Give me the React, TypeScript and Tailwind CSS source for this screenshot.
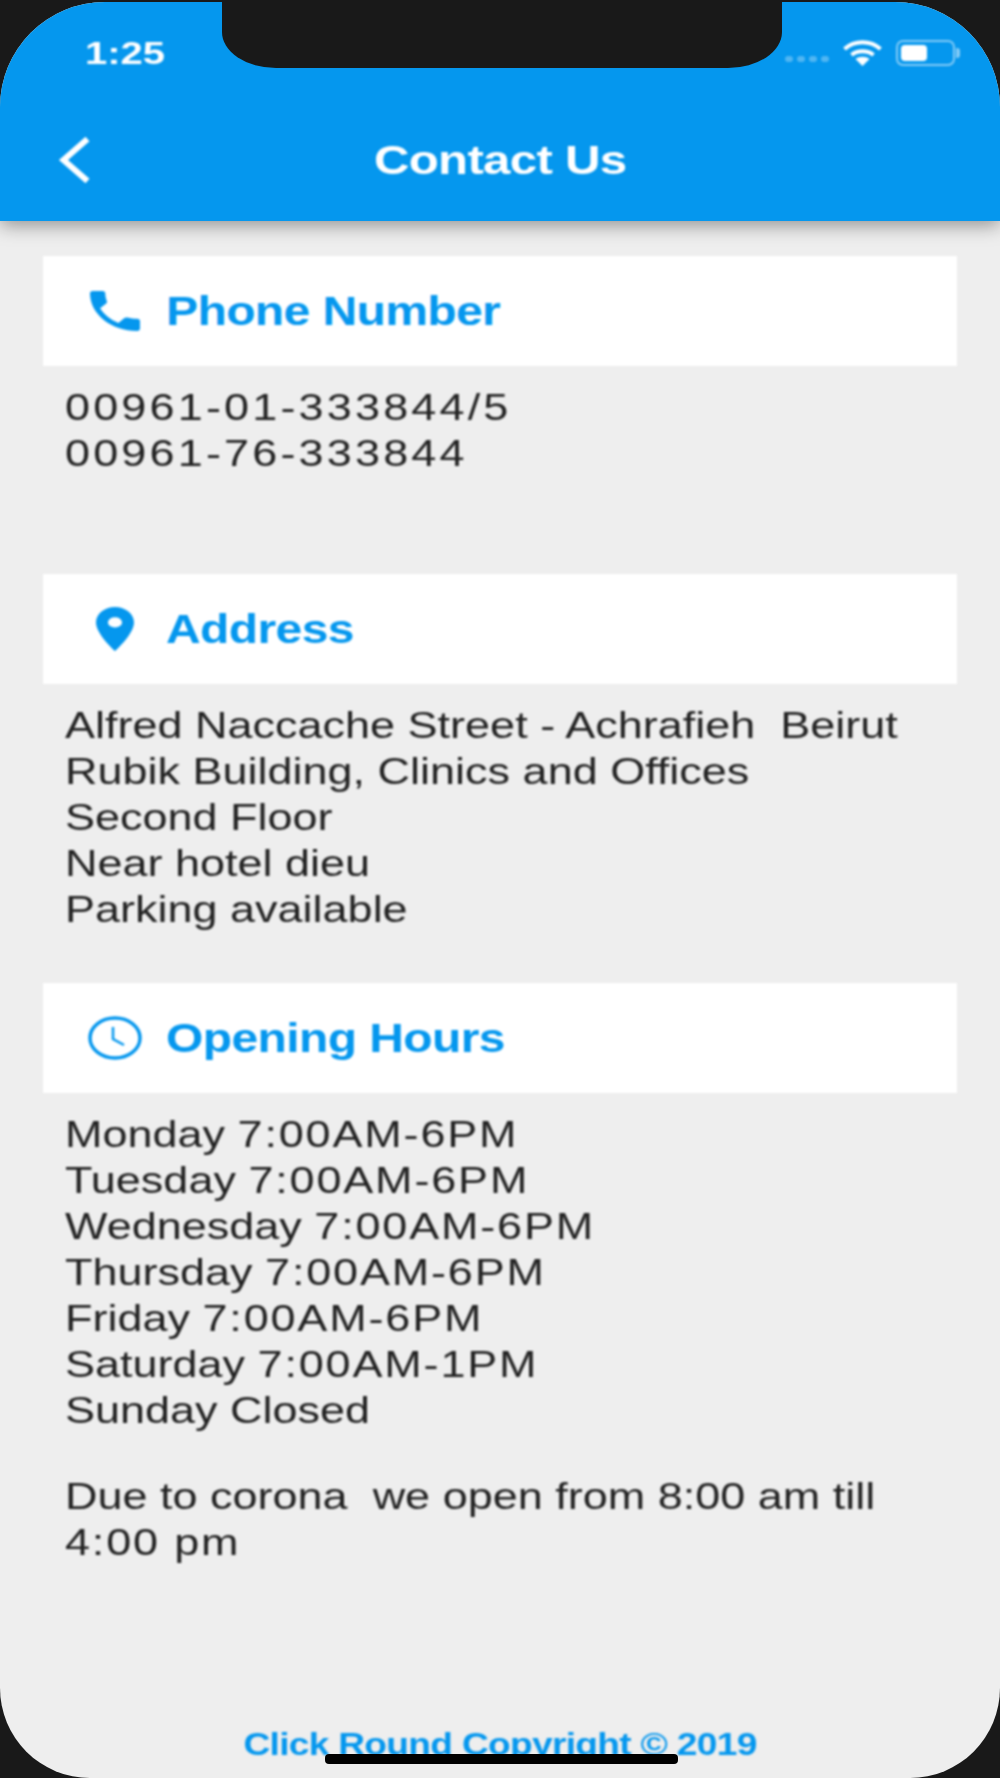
const blue = "#0597ee";

const PhoneIcon = () => (
  <svg viewBox="3 3 18 18" preserveAspectRatio="none" className="w-[50px] h-[40px]" fill={blue}>
    <path d="M6.62 10.79c1.44 2.83 3.76 5.14 6.59 6.59l2.2-2.2c.27-.27.67-.36 1.02-.24 1.12.37 2.33.57 3.57.57.55 0 1 .45 1 1V20c0 .55-.45 1-1 1-9.39 0-17-7.61-17-17 0-.55.45-1 1-1h3.5c.55 0 1 .45 1 1 0 1.25.2 2.45.57 3.57.11.35.03.74-.25 1.02l-2.2 2.2z" />
  </svg>
);

const PinIcon = () => (
  <svg viewBox="5 2 14 20" preserveAspectRatio="none" className="w-[38px] h-[44px]" fill={blue}>
    <path d="M12 2C8.13 2 5 5.13 5 9c0 5.25 7 13 7 13s7-7.75 7-13c0-3.87-3.13-7-7-7zm0 9.3a2.6 2.3 0 1 1 0-4.6 2.6 2.3 0 0 1 0 4.6z" fillRule="evenodd" />
  </svg>
);

const ClockIcon = () => (
  <svg viewBox="0 0 54 44" className="w-[54px] h-[44px]" fill="none" stroke={blue}>
    <ellipse cx="27" cy="22" rx="25" ry="20" strokeWidth="3.5" />
    <path d="M25 11v12l11 6" strokeWidth="2.5" />
  </svg>
);

const Card = ({ icon, title }: { icon: React.ReactNode; title: string }) => (
  <div className="h-[110px] bg-white flex items-center">
    <div className="w-[123px] shrink-0 flex justify-center pl-[20px]">{icon}</div>
    <h2 className="text-[40px] font-bold tracking-[-0.5px] text-[#0597ee] scale-x-[1.2] origin-left">{title}</h2>
  </div>
);

// the shot is stretched sideways, so text gets scale-x. digits run wider than that
const T = ({ children }: { children: React.ReactNode }) => <span className="tracking-[1.5px]">{children}</span>;

const Lines = ({ children, className }: { children: React.ReactNode; className: string }) => (
  <div className={"ml-[22px] text-[37px] leading-[46px] text-[#222222] whitespace-pre scale-x-[1.216] origin-left " + className}>
    {children}
  </div>
);

export default function App() {
  return (
    <div className="w-[1000px] h-[1778px] overflow-hidden bg-[#191919] pt-[2px] font-['Liberation_Sans',sans-serif]">
      <div className="relative w-full h-[1776px] overflow-hidden bg-[#eeeeee] rounded-tl-[105px] rounded-tr-[105px] rounded-bl-[90px] rounded-br-[90px] flex flex-col">
        <header className="h-[219px] shrink-0 bg-[#0597ee] shadow-[0_4px_18px_rgba(0,0,0,0.4)] text-white relative">
          <div className="flex justify-between items-center pl-[85px] pr-[37px] pt-[33px] blur-[0.8px]">
            <span className="text-[32px] font-bold leading-[36px] scale-x-[1.25] origin-left">1:25</span>
            <div className="flex items-center">
              <div className="flex gap-[4px] mr-[13px] mt-[12px]">
                {[0, 1, 2, 3].map((i) => (
                  <span key={i} className="w-[8px] h-[6px] rounded-full bg-white/30" />
                ))}
              </div>
              <svg viewBox="0 0 40 26" className="w-[41px] h-[26px] mr-[13px]" fill="none" stroke="white">
                <path d="M2 9C12 0 28 0 38 9" strokeWidth="4" />
                <path d="M9 15c6-5 16-5 22 0" strokeWidth="4" />
                <path d="M20 26l-7-7c4-3 10-3 14 0z" fill="white" stroke="none" />
              </svg>
              <div className="relative w-[59px] h-[26px] rounded-[7px] border-2 border-white/50 p-[3px] mr-[8px]">
                <div className="w-[26px] h-full rounded-[4px] bg-white" />
                <span className="absolute right-[-7px] top-[6px] w-[4px] h-[10px] rounded-r-[3px] bg-white/50" />
              </div>
            </div>
          </div>
          <div className="relative flex justify-center items-center mt-[64px] blur-[0.8px]">
            <svg viewBox="0 0 32 46" className="absolute left-[58px] w-[33px] h-[46px]" fill="none" stroke="white" strokeWidth="6">
              <path d="M29 2L5 23l24 21" />
            </svg>
            <h1 className="text-[41px] font-bold leading-[50px] tracking-[-0.6px] scale-x-[1.2]">Contact Us</h1>
          </div>
        </header>

        <div className="absolute z-10 top-[-2px] left-[222px] w-[560px] h-[68px] bg-[#191919] rounded-b-[54px_36px]" />

        <main className="flex-1 flex flex-col px-[43px] pt-[35px] blur-[0.8px]">
          <Card icon={<PhoneIcon />} title="Phone Number" />
          <Lines className="pt-[19px] h-[208px] tracking-[2.6px]">
            <div>00961-01-333844/5</div>
            <div>00961-76-333844</div>
          </Lines>
          <Card icon={<PinIcon />} title="Address" />
          <Lines className="pt-[19px] h-[299px]">
            <div>Alfred Naccache Street - Achrafieh  Beirut</div>
            <div>Rubik Building, Clinics and Offices</div>
            <div>Second Floor</div>
            <div>Near hotel dieu</div>
            <div>Parking available</div>
          </Lines>
          <Card icon={<ClockIcon />} title="Opening Hours" />
          <Lines className="pt-[19px]">
            <div>Monday <T>7:00AM-6PM</T></div>
            <div>Tuesday <T>7:00AM-6PM</T></div>
            <div>Wednesday <T>7:00AM-6PM</T></div>
            <div>Thursday <T>7:00AM-6PM</T></div>
            <div>Friday <T>7:00AM-6PM</T></div>
            <div>Saturday <T>7:00AM-1PM</T></div>
            <div>Sunday Closed</div>
          </Lines>
          <Lines className="pt-[40px]">
            <div>Due to corona  we open from 8:00 am till</div>
            <div><T>4:00 pm</T></div>
          </Lines>
          <footer className="mt-auto mb-[16px] text-center text-[32px] font-bold leading-[36px] tracking-[-0.6px] text-[#0597ee] scale-x-[1.16]">
            Click Round Copyright © 2019
          </footer>
        </main>

        <div className="absolute bottom-[14px] left-[325px] w-[353px] h-[10px] rounded-[4px] bg-black blur-[0.5px]" />
      </div>
    </div>
  );
}
